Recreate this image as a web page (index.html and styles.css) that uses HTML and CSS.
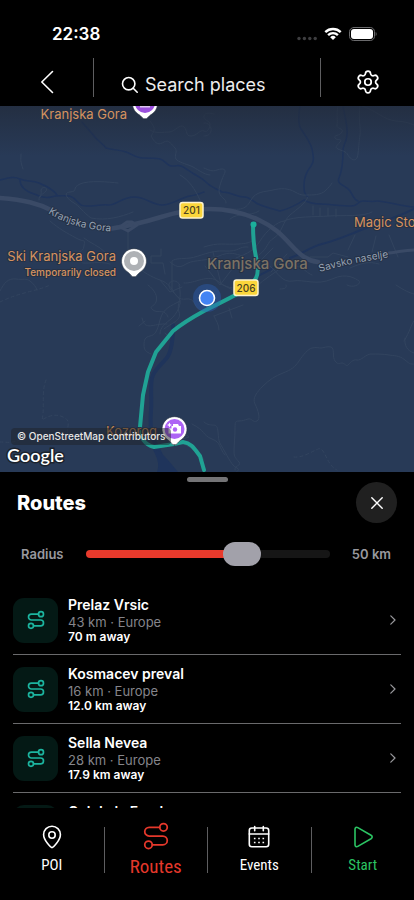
FILE: index.html
```html
<!DOCTYPE html>
<html lang="en">
<head>
<meta charset="utf-8">
<meta name="viewport" content="width=device-width, initial-scale=1">
<title>Routes</title>
<link rel="stylesheet" href="styles.css">
</head>
<body>
<svg class="defs" aria-hidden="true">
  <symbol id="route" viewBox="0 0 24 24">
    <circle cx="6" cy="19" r="3"/><circle cx="18" cy="5" r="3"/>
    <path d="M9 19h8.5a3.5 3.5 0 0 0 0-7h-11a3.5 3.5 0 0 1 0-7H15"/>
  </symbol>
  <symbol id="chevron" viewBox="0 0 6 10"><path d="M.8.8 5 5 .8 9.2"/></symbol>
</svg>
<div class="app">
  <header class="top">
    <div class="status">
      <time class="clock">22:38</time>
      <div class="signals" aria-hidden="true">
        <svg class="cell" width="20" height="14" viewBox="0 0 20 14"><circle cx="2" cy="11.500" r="1.700"/><circle cx="7.400" cy="11.500" r="1.700"/><circle cx="12.800" cy="11.500" r="1.700"/><circle cx="18.200" cy="11.500" r="1.700"/></svg>
        <svg class="wifi" width="18" height="14" viewBox="0 0 18 14"><path d="M1.300 5.200a11 11 0 0 1 15.400 0M4.100 8.100a7 7 0 0 1 9.800 0"/><path class="wifi-dot" d="M9 13 6.200 10.200a4 4 0 0 1 5.600 0z"/></svg>
        <svg class="battery" width="28" height="14" viewBox="0 0 28 14"><rect class="case" x=".5" y=".5" width="25" height="13" rx="4.200"/><rect class="charge" x="2" y="2" width="22" height="10" rx="3"/><path class="tip" d="M26.700 5v4c1.200-.5 1.200-3.500 0-4z"/></svg>
      </div>
    </div>
    <div class="bar">
      <button class="bar-btn" type="button" aria-label="Back"><svg class="back" width="14" height="24" viewBox="0 0 14 24"><path d="M12.500 1.500 1.800 12l10.700 10.500"/></svg></button>
      <span class="rule"></span>
      <label class="search">
        <svg width="18" height="18" viewBox="0 0 18 18"><circle cx="7.700" cy="7.700" r="6.200"/><path d="m12.200 12.200 4 4"/></svg>
        <input type="text" placeholder="Search places" aria-label="Search places">
      </label>
      <span class="rule"></span>
      <button class="bar-btn" type="button" aria-label="Settings"><svg class="gear" width="26" height="26" viewBox="0 0 24 24"><path d="M9.671 4.136a2.340 2.340 0 0 1 4.659 0 2.340 2.340 0 0 0 3.319 1.915 2.340 2.340 0 0 1 2.330 4.033 2.340 2.340 0 0 0 0 3.831 2.340 2.340 0 0 1-2.330 4.033 2.340 2.340 0 0 0-3.319 1.915 2.340 2.340 0 0 1-4.659 0 2.340 2.340 0 0 0-3.320-1.915 2.340 2.340 0 0 1-2.330-4.033 2.340 2.340 0 0 0 0-3.831A2.340 2.340 0 0 1 6.350 6.051a2.340 2.340 0 0 0 3.319-1.915"/><circle cx="12" cy="12" r="3"/></svg></button>
    </div>
  </header>

  <section class="map" aria-label="Map">
    <svg class="canvas" viewBox="0 106 414 366" preserveAspectRatio="xMidYMid slice">
      <defs>
        <linearGradient id="shade" x1="0" y1="0" x2="0" y2="1"><stop offset="0" stop-color="#222b3b" stop-opacity=".75"/><stop offset="1" stop-color="#222b3b" stop-opacity="0"/></linearGradient>
        <path id="savsko" d="M320 272Q352 262 400 256"/>
        <path id="kgroad" d="M48 213Q76 231 122 232"/>
      </defs>
      <g class="water">
        <path d="M82 122c4 5 8 9 12 14s8 7 12 12c8 2 14 2 20 4s10 6 17 6 12 0 17 1 7 7 12 7 6-1 9 0 8 5 13 8 9 5 13 9 10 6 15 9c5 0 8 1 13 3s6 2 10 2 9 5 13 7 15 5 22 7c8-2 18-7 24-11 5 3 11 4 17 4s22 2 30 2 6-5 12-5 9 1 14 0 30 7 39 6"/>
        <path d="M300 106c-2 12-1 20 1 23s10 14 11 20 3 12-1 17-7 13-7 19 0 9 4 12M343 106c2 12 5 20 4 29s-4 9-4 16-1 20-4 27 7 7 11 13 4 9 8 10"/>
        <path d="M0 180c8-2 14-4 20-1s12 1 19 4 14 6 18 12M20 180c0 8 8 12 14 14s10 5 17 3 11-1 17-1 9 6 13 9 20-1 27 0 14-8 26-8 18 8 28 8 18-7 28-9 8-2 14-4"/>
        <path class="wide" d="M290 258c12-4 20-11 32-14s24-8 34-12 25-10 34-13 14-5 24-10M258 276c10-5 20-11 32-16"/>
        <path class="river" d="M173 325c0 13-1 24-5 31s-14 13-16 22 0 21-1 33-1 23 4 32 7 12 9 29"/>
      </g>
      <path class="lake" d="M152 448c8 2 12 8 16 12l10 12h-21c3-8 0-15-5-24z"/>
      <g class="lanes">
        <path d="M150 121c5 7 6 8 1 15 5 9 8 9 13 6s8 3 11 6-1 8 1 11 10 5 15 7 13 9 19 9M150 130c6 4 13 2 19 2s11-9 15-5 1 9 7 9 9-7 13-5 6-4 6-7-7-4-6-8 6-3 10-2"/>
        <path d="M118 183c-9-1-29-3-38 1s-1 7-10 8 0 9 4 11 10 10 17 15c15 3 30-1 42-6M180 175c9 5 15 14 20 25M39 200c0-6 3-3 2-10 2-5 7-2 5 1s-4 2-6 6M21 154c0 7-1 6 2 15"/>
        <path d="M338 106c-2 10 0 15-1 19s7 3 5 7-9 3-7 6 8 0 5 4-6 5-2 7 8 2 10 6 9 9 10-1 1-12 2-19-2-16 0-29M362 106c15 5 22 14 34 15s12 2 18 4M204 123c4-1 8 4 7 8s-4 5-7 5M204 168c5 2 8 4 13 2s9-1 8 2-6 13-6 19 8 8 7 12"/>
        <path d="M223 208c19 3 23 1 28-8s14-8 22-10 15-2 22 2 9 3 13 3 13 0 17-4 6-6 7-8M308 197c-3 7-11 12-18 18s-8 18-16 23-5 9-15 17M230 219c8-7 20-2 29-8M284 221c-6 0-18 10-24 20s-12 12-24 17M284 221c10-5 32-4 45-5s35 1 43-4M313 206v9M320 208v8M328 208v8M336 209v8"/>
        <path d="M128 232v20c0 9 15 22 32 28s12 21 26 19 4 20 28 8M50 221c9 8 17 12 26 17s9 0 8 8-8 4-4 8 5 2 2 7 16-1 28 3M84 238c6 5 15 8 21 14M0 291c4-8 8-13 16-12s10-1 14 2 6 6 7 9M161 249v7h-10v7h12l2 11M172 290v-29c4-3 9-2 18-3s20-8 35-7 13-5 23-4M204 247c15-5 20-2 35-3s10-4 17-3"/>
        <path d="M170 262c9 8 12 4 18 1s20-2 31-7 16-2 24 0M205 266l15 19 19-25M213 252l8 32 20 10M180 285c-4-7-12-4-11 1s6 7 10 12-3 17-8 21-11 8-11 15M184 283c11 1 24-10 35-1s16 3 23 11M257 286c7-7 18-13 25-19s10-3 17 0 8 6 13 8M270 266c8 7 12 17 23 15s24 5 39-2 24 0 27 2-5 8-12 4M257 264l16-16M287 254l-16 18M310 257h18l5-4 15 4M350 268c12-5 18-7 29-4M372 252l4-16M348 250l7-15M389 235l9 22"/>
        <path d="M179 285c4 15-3 18 0 27s-8 11-15 17M148 285c7 5 10 12 8 17s-8 4-3 8 12-2 15 7M142 318c3 14 11 5 25 6M180 301c-9 5-17 7-20 19s-5 15-10 16-6 4-6 9 2 7 7 9M160 280l10 12 12-5M139 326l6-5M165 333l4 4"/>
        <path d="M243 305l-29 11M214 316c2 5 5 8 5 14M229 308l3 10M404 341c6-9 7-17 10-20M414 353c-7-2-10-8-9-15M396 285c9 6 14 8 18 9M280 289c5 0 7-1 6-4M204 422c8 7 13-2 14 10s1 9 7 20 8 14 12 16-2 5-4 6"/>
        <path class="ridge" d="M235 470c-1-5 7-4 4-8s-5-4-5-11 1-13 1-21 0-9 4-9 5-1 9-2 5 4 9 2 1-11-2-17 2-12 8-18 12-10 20-13 12-6 16-12 9-12 13-13 7 0 9 0 6-2 10-1 1 10 4 14 4 2 7 2 4 4 6 2 5-6 9-5 9-6 14-6 13 0 18 1 10 0 16 5 5 4 13 4"/>
        <path class="dash" d="M46 380c-5 12-1 28-4 40 9-6 16-6 23-2s0 12 3 20M0 442c7 0 14 2 23-4M0 302c20-10 38-11 50-17M294 457c8 1 17-5 24-8s8 16 19 21"/>
        <path d="M192 424c14 7 10 11 20 15s6 8 13 16M175 425l14 12-13 4M180 440c8 10 17 6 24 20"/>
      </g>
      <g class="main-roads">
        <path d="M0 198c24 2 38 5 53 13M109 229c20-3 36-7 52-12s30-8 48-8 35 4 50 11 22 14 32 25 17 16 27 17"/>
        <path class="branch" d="M389 253c10-1 15-3 25-3"/>
        <path class="branch" d="M120 227l7-5h5l5 3-9 6z"/>
      </g>
      <g class="route-line">
        <path d="M253 224c0 17 1 24 3 33s3 16 0 21-10 11-15 14-25 13-37 19c-11 6-20 11-31 20l-17 21-8 20-5 23-3 32c0 10 3 17 14 20l20-3 9-2c8 1 11 6 17 14l4 14"/>
      </g>
      <circle class="stop" cx="253.500" cy="224.500" r="3"/>
      <circle class="halo" cx="207" cy="298" r="14"/>
      <circle class="me" cx="207" cy="298" r="7.500"/>
      <rect x="0" y="106" width="414" height="50" fill="url(#shade)"/>

      <g class="poi">
        <text x="127" y="119" text-anchor="end">Kranjska Gora</text>
        <text x="116" y="261" text-anchor="end">Ski Kranjska Gora</text>
        <text class="note" x="116" y="276" text-anchor="end">Temporarily closed</text>
        <text x="354" y="227">Magic Store</text>
        <text class="dim" x="106" y="436">Kozorog</text>
      </g>
      <text class="town" x="207" y="269">Kranjska Gora</text>
      <text class="street"><textPath href="#savsko">Savsko naselje</textPath></text>
      <text class="street"><textPath href="#kgroad">Kranjska Gora</textPath></text>
      <g class="shield"><rect x="180" y="202.500" width="23" height="15.500" rx="2.500"/><text x="191.500" y="214">201</text></g>
      <g class="shield"><rect x="234" y="280" width="24" height="15.500" rx="2.500"/><text x="246" y="292">206</text></g>
      <g>
        <path class="pin-edge" d="M145 119c-3 0-3-3-7-5a12.500 12.500 0 1 1 14 0c-4 2-4 5-7 5z"/>
        <circle cx="145" cy="103" r="10" fill="#9a50dc"/><path d="M140 106h10v1.500h-10z" fill="#dcc4ef"/>
      </g>
      <g>
        <path class="pin-edge" d="M134 277c-3 0-3-3-7-5.500a12.500 12.500 0 1 1 14 0c-4 2.500-4 5.500-7 5.500z"/>
        <circle cx="134" cy="261" r="10" fill="#aeb1b5"/><circle cx="134" cy="261" r="4" fill="#fff"/>
      </g>
      <g>
        <path class="pin-edge" d="M174.500 445c-3 0-3-3-7-5.500a12.500 12.500 0 1 1 14 0c-4 2.500-4 5.500-7 5.500z"/>
        <circle cx="174.500" cy="429" r="10" fill="#ad63f5"/>
        <path d="M173 426v-2h5l1 2h2v7.500h-12.500v-5h3v-2.500z" fill="#fff"/><circle cx="175" cy="429.500" r="2.200" fill="#ad63f5"/><path d="M169.500 422.500l.8 1.700 1.700.8-1.700.8-.8 1.700-.8-1.700-1.700-.8 1.700-.8z" fill="#fff"/>
      </g>
    </svg>
    <div class="credits">
      <span class="osm">© OpenStreetMap contributors</span>
      <span class="google">Google</span>
    </div>
  </section>

  <main class="sheet">
    <span class="handle"></span>
    <div class="sheet-head">
      <h1>Routes</h1>
      <button class="close" type="button" aria-label="Close"><svg width="12" height="12" viewBox="0 0 12 12"><path d="m.8.8 10.400 10.400M11.200.8.8 11.200"/></svg></button>
    </div>
    <div class="radius">
      <label for="radius">Radius</label>
      <input id="radius" type="range" min="10" max="70" value="50">
      <output for="radius">50 km</output>
    </div>
    <ul class="routes">
      <li><a href="#prelaz-vrsic"><span class="tile"><svg><use href="#route"/></svg></span><span class="info"><strong>Prelaz Vrsic</strong><span class="meta">43 km · Europe</span><span class="away">70 m away</span></span><svg class="go"><use href="#chevron"/></svg></a></li>
      <li><a href="#kosmacev-preval"><span class="tile"><svg><use href="#route"/></svg></span><span class="info"><strong>Kosmacev preval</strong><span class="meta">16 km · Europe</span><span class="away">12.0 km away</span></span><svg class="go"><use href="#chevron"/></svg></a></li>
      <li><a href="#sella-nevea"><span class="tile"><svg><use href="#route"/></svg></span><span class="info"><strong>Sella Nevea</strong><span class="meta">28 km · Europe</span><span class="away">17.9 km away</span></span><svg class="go"><use href="#chevron"/></svg></a></li>
      <li><a href="#col-de-la-forclaz"><span class="tile"><svg><use href="#route"/></svg></span><span class="info"><strong>Col de la Forclaz</strong></span><svg class="go"><use href="#chevron"/></svg></a></li>
    </ul>
  </main>

  <nav class="tabs">
    <a class="tab" href="#poi"><svg width="24" height="24" viewBox="0 0 24 24"><path d="M12 22.600c-1 0-8.400-7-8.400-13a8.400 8.400 0 0 1 16.800 0c0 6-7.400 13-8.400 13z"/><circle cx="12" cy="10" r="3.200"/></svg>POI</a>
    <a class="tab active" href="#routes" aria-current="page"><svg width="30" height="30"><use href="#route"/></svg>Routes</a>
    <a class="tab" href="#events"><svg width="24" height="24" viewBox="0 0 24 24"><rect x="2.300" y="3" width="19.400" height="18.800" rx="2.500"/><path d="M2.300 9h19.400M7.700 1.500v4.200M16.300 1.500v4.200"/><path class="days" d="M6.900 13.500h1.600M11.200 13.500h1.600M15.500 13.500h1.600M6.900 17.500h1.600M11.200 17.500h1.600M15.500 17.500h1.600"/></svg>Events</a>
    <a class="tab start" href="#start"><svg width="24" height="24" viewBox="0 0 24 24"><path d="M4 4.300v15.400c0 1.900 1.400 2.500 2.800 1.700l13.200-7.700c1.600-1 1.600-2.400 0-3.400L6.800 2.600C5.400 1.800 4 2.400 4 4.300z"/></svg>Start</a>
  </nav>
</div>
</body>
</html>
```
FILE: styles.css
```css
* { box-sizing: border-box; }

body {
  margin: 0;
  background: #000;
  color: #fff;
  font-family: Inter, "Liberation Sans", sans-serif;
}

button {
  padding: 0;
  border: 0;
  background: none;
  color: inherit;
  cursor: pointer;
}

a { color: inherit; text-decoration: none; }

svg {
  display: block;
  fill: none;
  stroke: currentColor;
  stroke-width: 2;
  stroke-linecap: round;
  stroke-linejoin: round;
  flex: none;
}

.defs { position: absolute; width: 0; height: 0; }

.app { display: flex; flex-direction: column; height: 100vh; }

/* Header */
.status {
  display: flex;
  justify-content: space-between;
  align-items: center;
  height: 58px;
  padding: 10px 37px 0 52px;
}
.clock { font-size: 17px; font-weight: 600; line-height: 24px; }
.signals { display: flex; align-items: center; gap: 7px; }
.cell { fill: #3e3e40; stroke: none; }
.wifi { stroke-width: 2.4; stroke-linecap: butt; }
.wifi-dot { fill: #fff; stroke: none; }
.battery { stroke: none; }
.case { stroke: #6a6a6c; stroke-width: 1; }
.charge { fill: #fff; }
.tip { fill: #6a6a6c; }

.bar { display: flex; height: 48px; }
.bar-btn { display: flex; justify-content: center; align-items: center; width: 93px; }
.back { stroke-width: 1.6; }
.gear { stroke-width: 1.6; }
.rule { width: 1px; height: 39px; background: #5e5e60; }
.search {
  display: flex;
  flex: 1;
  align-items: center;
  gap: 6px;
  min-width: 0;
  padding: 6px 0 0 27px;
}
.search svg { stroke-width: 1.6; }
.search input {
  flex: 1;
  min-width: 0;
  padding: 0;
  border: 0;
  outline: 0;
  background: none;
  color: #fff;
  font: 18px/24px Inter, "Liberation Sans", sans-serif;
}
.search input::placeholder { color: #ededed; opacity: 1; }

/* Map */
.map { position: relative; flex: 366 1 0; min-height: 0; background: #283a57; overflow: hidden; }
.canvas { width: 100%; height: 100%; stroke: none; }
.water { stroke: #1f345b; stroke-width: 1.5; }
.wide { stroke-width: 2; }
.river { stroke-width: 4; }
.lake { fill: #1f345b; }
.lanes { stroke: #32445f; stroke-width: 1; }
.dash { stroke-dasharray: 3 3; }
.main-roads { stroke: #3a4a66; stroke-width: 4.5; }
.branch { stroke-width: 3; }
.route-line { stroke: #20a294; stroke-width: 4; }
.stop { fill: #1bb09c; }
.halo { fill: #2a62b8; fill-opacity: .4; }
.me { fill: #4384f4; stroke: #fff; stroke-width: 1.6; }
.pin-edge { fill: #fff; stroke: #26303f; stroke-width: .6; }
.canvas text { paint-order: stroke; stroke: #253146; stroke-width: 2; }
.poi { fill: #d5935f; font-size: 13px; }
.poi .note { font-size: 10px; font-weight: 500; }
.poi .dim { fill: #c98a50; }
.canvas .town { fill: #7c7264; font-size: 15px; font-weight: 500; }
.street { fill: #97a3b4; font-size: 10px; }
.shield rect { fill: #fbd63b; stroke: #fdf3cd; stroke-width: 1.5; }
.canvas .shield text { fill: #4c4320; stroke: none; font-size: 10px; font-weight: 500; text-anchor: middle; }

.credits {
  position: absolute;
  bottom: 7px;
  left: 7px;
  display: flex;
  flex-direction: column;
  align-items: flex-start;
}
.osm {
  margin-left: 4px;
  padding: 0 6px;
  border-radius: 4px;
  background: rgba(30, 34, 42, .5);
  color: #e6e6e6;
  font-size: 10px;
  font-weight: 500;
  line-height: 17px;
}
.google {
  color: #fff;
  font: 600 18px/20px Lato, sans-serif;
  paint-order: stroke;
  -webkit-text-stroke: 3px #1b222d;
}

/* Sheet */
.sheet { display: flex; flex-direction: column; flex: 336 1 0; min-height: 0; overflow: hidden; }
.handle { flex: none; align-self: center; width: 41px; height: 5px; margin-top: 5px; border-radius: 3px; background: #747476; }
.sheet-head {
  display: flex;
  flex: none;
  justify-content: space-between;
  align-items: center;
  padding: 0 17px;
}
h1 { margin: 0; font-size: 20px; font-weight: 800; line-height: 24px; }
.close {
  display: flex;
  justify-content: center;
  align-items: center;
  width: 41px;
  height: 41px;
  border-radius: 50%;
  background: #202020;
}
.close svg { stroke-width: 1.4; }

.radius {
  display: flex;
  flex: none;
  align-items: center;
  gap: 22px;
  padding: 19px 23px 20px 21px;
  color: #98989e;
  font-size: 13px;
  font-weight: 600;
  line-height: 24px;
}
.radius input {
  flex: 1;
  min-width: 0;
  height: 24px;
  margin: 0;
  background: none;
  appearance: none;
}
.radius input::-webkit-slider-runnable-track {
  height: 8px;
  border-radius: 4px;
  background: linear-gradient(to right, #e83a2c 66%, #161616 66%);
}
.radius input::-webkit-slider-thumb {
  width: 38px;
  height: 24px;
  margin-top: -8px;
  border-radius: 12px;
  background: #a2a1aa;
  appearance: none;
}

.routes { flex: 1; min-height: 0; margin: 0; padding: 0 13px; list-style: none; overflow: hidden; }
.routes li { border-bottom: 1px solid #6a6a6c; }
.routes a { display: flex; align-items: center; height: 68px; }
.tile {
  display: flex;
  justify-content: center;
  align-items: center;
  width: 45px;
  height: 45px;
  border-radius: 11px;
  background: #041915;
  color: #1cb5a0;
}
.tile svg { width: 20px; height: 20px; }
.info { display: flex; flex: 1; flex-direction: column; height: 48px; margin-left: 10px; }
.info strong { font-size: 14px; font-weight: 600; line-height: 18px; }
.meta { color: #85858b; font-size: 13px; line-height: 16px; }
.away { font-size: 12px; font-weight: 600; line-height: 14px; }
.go { width: 6px; height: 10px; margin-right: 5px; color: #98989c; stroke-width: 1.2; }

/* Tab bar */
.tabs { display: grid; grid-template-columns: repeat(4, 1fr); flex: none; padding: 19px 0 27px; }
.tab {
  display: flex;
  flex-direction: column;
  justify-content: center;
  align-items: center;
  gap: 6px;
  height: 46px;
  font: 400 15px/20px "Roboto Condensed", "Liberation Sans Narrow", Roboto, sans-serif;
}
.tab + .tab { border-left: 1px solid #5e5e60; }
.tab svg { stroke-width: 1.6; }
.tab .days { stroke-width: 1.5; stroke-linecap: butt; }
.tab.active { gap: 4px; color: #e5382b; font-size: 19px; line-height: 24px; }
.tab.active svg { stroke-width: 1.4; }
.start { color: #2bc463; }
```
